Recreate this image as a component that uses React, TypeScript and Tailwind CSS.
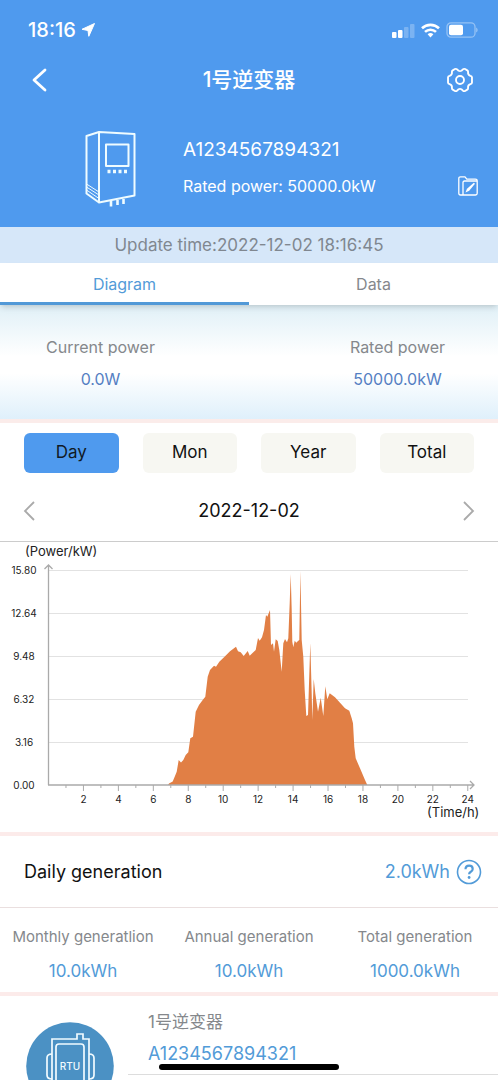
import { useState } from "react";

const periods = ["Day", "Mon", "Year", "Total"];

const totals = [
  { label: "Monthly generatlion", value: "10.0kWh" },
  { label: "Annual generation", value: "10.0kWh" },
  { label: "Total generation", value: "1000.0kWh" },
];

const yTicks = ["15.80", "12.64", "9.48", "6.32", "3.16", "0.00"];
const hours = Array.from({ length: 24 }, (_, i) => i + 1);

// Power curve in chart units, baseline at y=243
const powerCurve =
  "168,243 169,241.5 172.7,239.5 175,234 176.7,229.7 178.7,218 181,220.5 183.3,218 185.7,213 188.3,210.3 190.3,196.3 193,194.7 195.7,169.7 199,163 202.7,158 205.3,154.7 207.7,134.7 210,128 214,123.7 216,124.7 219.3,119.7 224,115.3 230,109.3 236,104.7 238,109.3 240.7,110.3 243.7,114 247.7,109 249.7,113.7 253.3,110.3 255.7,108 258,96 259.7,98.7 262,95.3 264,88 266,73 267.3,74.7 270,68 271,103 273,101.3 274,109.7 275.7,97.3 277.7,99 279.3,108 281.7,129.7 283.3,101.3 285,97 287,100.3 288.3,96.3 289.7,61.3 290.7,32 291.7,68 292.3,99.7 293.3,105.3 294.7,98.7 296.3,100.7 298,99 299.3,98 300.4,29 301.7,98 303.3,114.7 304.7,148 306.3,174 308,173 310.3,101 311.7,151.3 312.3,178 313.7,137 315.3,151.3 318,169.7 320.7,155.7 323.3,174 325.3,144.3 327.3,157.3 329.7,151.3 335,155.3 340,160.7 345,166.3 349.3,168.7 351.7,176.3 353,181.3 354.3,204.7 355.7,216.3 360,226.3 365,238 367.3,243";

function StatusBar() {
  return (
    <div className="flex h-15 items-center justify-between pr-5 pl-7">
      <div className="flex items-center gap-1 text-xl font-medium">
        <span>18:16</span>
        <svg width="16" height="16" viewBox="0 0 16 16" fill="currentColor" stroke="currentColor" strokeLinejoin="round">
          <path d="M14.5 1.500 2 7.300l6 1.200.8 5.800z" />
        </svg>
      </div>
      <div className="flex items-center gap-1.5">
        <svg width="23" height="15" viewBox="0 0 23 15" fill="currentColor">
          <rect x="0" y="9" width="4.5" height="6" rx="1" />
          <rect x="6" y="7" width="4.5" height="8" rx="1" />
          <rect x="12" y="4" width="4.5" height="11" rx="1" opacity=".25" />
          <rect x="18" y="1" width="4.5" height="14" rx="1" opacity=".25" />
        </svg>
        <svg width="19" height="15" viewBox="0 0 19 15" fill="none" stroke="currentColor" strokeWidth="2.6">
          <path d="M1 5.3a12.2 12.2 0 0 1 17 0" />
          <path d="M4 8.9a8 8 0 0 1 11 0" />
          <path d="M6.6 11.3a4.2 4.2 0 0 1 5.8 0L9.5 14.4z" fill="currentColor" stroke="none" />
        </svg>
        <svg width="32" height="16" viewBox="0 0 32 16" fill="none">
          <rect x="1" y=".8" width="28" height="14.4" rx="4" stroke="currentColor" strokeWidth="1.3" opacity=".4" />
          <rect x="3" y="2.8" width="14" height="10.4" rx="2" fill="currentColor" />
          <path d="M30.3 5.5c1.6.7 1.6 4.3 0 5z" fill="currentColor" opacity=".5" />
        </svg>
      </div>
    </div>
  );
}

function NavBar() {
  return (
    <div className="grid h-10 grid-cols-[1fr_auto_1fr] items-center px-6">
      <button type="button" aria-label="Back" className="justify-self-start pl-1">
        <svg width="24" height="26" viewBox="0 0 24 26" fill="none" stroke="currentColor" strokeWidth="2.8" strokeLinecap="round" strokeLinejoin="round">
          <path d="M17 3 6 13l11 10" />
        </svg>
      </button>
      <h1 className="text-[21px] font-medium">1号逆变器</h1>
      <button type="button" aria-label="Settings" className="justify-self-end">
        <svg width="28" height="26" viewBox="0 0 30 28" fill="none" stroke="currentColor" strokeWidth="2" strokeLinejoin="round">
          <path d="M9.5 2.2q1.2-.6 2.3.3L13.500 4q1.500.8 3 0l1.700-1.500q1.100-.9 2.300-.3l2.300 1.400q1 .7.900 1.800-.5 3.200 2.500 4.200 1.600.4 1.700 1.600v5.600q-.1 1.200-1.700 1.600-3 1-2.500 4.200.1 1.100-.9 1.800l-2.300 1.400q-1.200.6-2.300-.3L16.500 24q-1.500-.8-3 0l-1.700 1.500q-1.100.9-2.300.3l-2.300-1.400q-1-.7-.9-1.800.5-3.200-2.500-4.200-1.600-.4-1.700-1.600v-5.600q.1-1.200 1.700-1.600 3-1 2.500-4.200-.1-1.100.9-1.800z" />
          <circle cx="15" cy="14" r="4.300" />
        </svg>
      </button>
    </div>
  );
}

function DeviceHeader() {
  return (
    <div className="flex items-center pt-6.5 pr-5 pb-[17px] pl-20">
      <svg className="shrink-0" width="60" height="84" viewBox="0 0 60 84" fill="none" stroke="#effcff" strokeWidth="2" strokeLinejoin="round">
        <path d="M19 6 54.500 8v61.500L19 76.500z" />
        <path d="M19 6 6.500 10v57.500L19 76.500" />
        <path d="M26 18.500h22.500V40H26z" />
        <path d="M6.500 58 19 66M6.500 61 19 69M6.500 64 19 72.500" strokeWidth="1" />
        <path d="M27.500 45.500h20" strokeWidth="3.400" strokeDasharray="3 2.500" />
        <path d="M31 75v5.500M37.500 74v5M43.500 73v5" strokeWidth="2.600" />
      </svg>
      <div className="ml-[43px] flex-1 pt-1">
        <p className="text-[19px] leading-7">A1234567894321</p>
        <div className="mt-1 flex h-9 items-center justify-between text-base">
          <p>Rated power: 50000.0kW</p>
          <button type="button" aria-label="Edit device">
            <svg width="20" height="20" viewBox="0 0 20 20" fill="none" stroke="currentColor" strokeWidth="1.300" strokeLinejoin="round">
              <path d="M4.500 19H2.500Q.8 19 .8 17.300V2.500Q.8.900 2.500.900H7l1.800 2.300h8.500q1.900 0 1.900 1.800v12.300q0 1.700-1.700 1.700H4.500z" />
              <path d="M5 19V6.500Q5 5 6.500 5H19" />
              <path d="M7.500 16.500 9 12.800 15.800 6.700l1.200 1.100-5.800 7z" fill="currentColor" stroke="none" />
            </svg>
          </button>
        </div>
      </div>
    </div>
  );
}

function PowerChart() {
  return (
    <svg className="block w-full" viewBox="0 0 498 290" role="img" aria-label="Power by hour">
      <g fill="#222" fontSize="13">
        <text x="25" y="14">(Power/kW)</text>
        <text x="427" y="275">(Time/h)</text>
      </g>
      {yTicks.map((tick, i) => (
        <g key={tick}>
          {i < 5 && <path d={`M49 ${28.5 + i * 43}H468`} stroke="#e2e2e2" />}
          <text x="24" y={32 + i * 43} textAnchor="middle" fontSize="10" fill="#222">{tick}</text>
        </g>
      ))}
      <polygon points={powerCurve} fill="#e17f45" />
      <g stroke="#aaa" fill="none">
        <path d="M48.500 243V23M44.500 27l4-4 4 4" strokeWidth="1.300" />
        <path d="M48 243H474M470 239l4 4-4 4" strokeWidth="1.300" />
        {hours.map((h) => (
          <path key={h} d={`M${48.500 + h * 17.470} 243v${h % 2 ? 3 : 6}`} />
        ))}
      </g>
      {hours.filter((h) => h % 2 === 0).map((h) => (
        <text key={h} x={48.500 + h * 17.470} y="261" textAnchor="middle" fontSize="10" fill="#222">{h}</text>
      ))}
    </svg>
  );
}

function RtuIcon() {
  return (
    <svg className="shrink-0" width="88" height="88" viewBox="0 0 88 88">
      <circle cx="44" cy="44" r="43.800" fill="#4b91c4" />
      <g fill="none" stroke="#f1fbff" strokeWidth="1.700">
        <path d="M26 76V17h25v-5h6v5h6v59z" />
        <path d="M30 72V25q0-3 3-3h22q3 0 3 3v47z" />
        <path d="M26 32q-5 0-5 4v17q0 4 5 4M63 32q5 0 5 4v17q0 4-5 4" />
      </g>
      <text x="44" y="48" textAnchor="middle" fontSize="10" fontWeight="500" fill="#f1fbff">RTU</text>
    </svg>
  );
}

export default function App() {
  const [tab, setTab] = useState("Diagram");
  const [period, setPeriod] = useState("Day");

  return (
    <main className="flex h-screen flex-col overflow-hidden bg-white font-['Inter','Noto_Sans_CJK_SC',sans-serif] *:shrink-0">
      <header className="bg-[#4f9aee] text-white">
        <StatusBar />
        <NavBar />
        <DeviceHeader />
      </header>
      <p className="h-9 bg-[#d6e7f9] text-center text-[17px] leading-9 text-[#808790]">Update time:2022-12-02 18:16:45</p>

      <div role="tablist" className="relative grid h-[42px] grid-cols-2 shadow-md">
        {["Diagram", "Data"].map((name) => (
          <button
            key={name}
            type="button"
            role="tab"
            aria-selected={tab === name}
            onClick={() => setTab(name)}
            className={tab === name ? "border-b-3 border-[#5299d7] pt-0.5 text-base text-[#529bd8]" : "border-b-3 border-transparent pt-0.5 text-base text-[#85888c]"}
          >
            {name}
          </button>
        ))}
      </div>

      <section className="grid h-[114px] grid-cols-2 content-center bg-[linear-gradient(#e0f0f7,#fff_45%,#fff_60%,#dff0fb)] pt-0.5 text-center text-base leading-8">
        <div className="pr-12">
          <p className="text-[#85888c]">Current power</p>
          <p className="text-[#557fc3]">0.0W</p>
        </div>
        <div className="pl-12">
          <p className="text-[#85888c]">Rated power</p>
          <p className="text-[#557fc3]">50000.0kW</p>
        </div>
      </section>

      <section className="border-t-4 border-[#fbecea]">
        <div className="grid grid-cols-4 gap-6 px-6 pt-2.5">
          {periods.map((name) => (
            <button
              key={name}
              type="button"
              onClick={() => setPeriod(name)}
              className={period === name ? "h-10 rounded-md bg-[#4f9aee] text-[17px] text-[#111a25]" : "h-10 rounded-md bg-[#f7f7f2] text-[17px] text-[#111]"}
            >
              {name}
            </button>
          ))}
        </div>
        <div className="mt-2 flex h-15 items-center justify-between px-5 text-[#111]">
          <button type="button" aria-label="Previous day">
            <svg width="18" height="22" viewBox="0 0 18 22" fill="none" stroke="#aaa" strokeWidth="1.800">
              <path d="M14 2 5 11l9 9" />
            </svg>
          </button>
          <span className="text-lg">2022-12-02</span>
          <button type="button" aria-label="Next day">
            <svg width="18" height="22" viewBox="0 0 18 22" fill="none" stroke="#aaa" strokeWidth="1.800">
              <path d="m4 2 9 9-9 9" />
            </svg>
          </button>
        </div>
        <div className="border-t border-[#ccc]">
          <PowerChart />
        </div>
      </section>

      <section className="border-t-4 border-[#fcebea]">
        <div className="flex h-18 items-center justify-between border-b border-[#eadfdf] pr-4 pl-6 text-lg">
          <h2 className="text-[#111]">Daily generation</h2>
          <div className="flex items-center gap-1.5 text-[#529bd8]">
            <span>2.0kWh</span>
            <button type="button" aria-label="Help">
              <svg className="block" width="26" height="26" viewBox="0 0 26 26" fill="none" stroke="currentColor" strokeWidth="1.600">
                <circle cx="13" cy="13" r="11.500" />
                <path d="M9.500 10.300q0-3.600 3.600-3.600t3.600 3.200q0 1.600-1.900 2.800-1.700 1-1.700 2.600" strokeWidth="2.200" />
                <circle cx="13.100" cy="18.500" r="1.400" fill="currentColor" stroke="none" />
              </svg>
            </button>
          </div>
        </div>
        <div className="grid h-21 grid-cols-3 content-center pt-2.5 text-center">
          {totals.map((item) => (
            <div key={item.label}>
              <p className="text-[15px] leading-8 whitespace-nowrap text-[#85888c]">{item.label}</p>
              <p className="text-[17px] leading-9 text-[#529bd8]">{item.value}</p>
            </div>
          ))}
        </div>
      </section>

      <section className="flex items-start border-t-4 border-[#fcebea] pt-2.5 pl-6">
        <div className="pt-4 pl-0.5">
          <RtuIcon />
        </div>
        <div className="ml-3.5 flex-1">
          <div className="border-b border-[#ddd] pb-1 pl-5">
            <p className="text-[17px] leading-8 text-[#85888c]">1号逆变器</p>
            <a href="#device" className="block text-lg leading-8 text-[#529bd8]">A1234567894321</a>
          </div>
        </div>
      </section>

      {/* home indicator */}
      <div className="fixed inset-x-0 bottom-2.5 mx-auto h-1.5 w-9/25 rounded-full bg-black" />
    </main>
  );
}
